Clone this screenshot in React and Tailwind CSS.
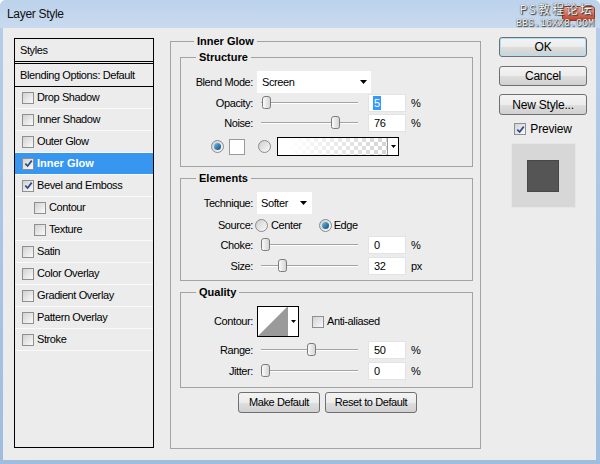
const styles = [
  { label: 'Drop Shadow' },
  { label: 'Inner Shadow' },
  { label: 'Outer Glow' },
  { label: 'Inner Glow', on: true, active: true },
  { label: 'Bevel and Emboss', on: true },
  { label: 'Contour', indent: true },
  { label: 'Texture', indent: true },
  { label: 'Satin' },
  { label: 'Color Overlay' },
  { label: 'Gradient Overlay' },
  { label: 'Pattern Overlay' },
  { label: 'Stroke' },
];

const btn =
  'rounded-[3px] border border-[#707070] bg-[linear-gradient(#f3f3f3_0%,#ececec_50%,#dedede_51%,#d0d0d0_100%)] flex items-center justify-center';

const Check = ({ on }) => (
  <span className="w-[12px] h-[12px] shrink-0 border border-[#8e8f8f] bg-gradient-to-br from-[#d2d2d2] to-[#fafafa] flex items-center justify-center">
    {on && (
      <svg viewBox="0 0 10 10" className="w-[9px] h-[9px]">
        <path d="M1.5 5.2 L4 7.8 L8.6 1.8" fill="none" stroke="#2c4a8e" strokeWidth="1.9" />
      </svg>
    )}
  </span>
);

const Radio = ({ on }) => (
  <span className="w-[13px] h-[13px] shrink-0 rounded-full border border-[#8a8a8a] bg-gradient-to-br from-[#cfcfcf] to-[#fbfbfb] flex items-center justify-center">
    {on && <span className="w-[7px] h-[7px] rounded-full bg-gradient-to-br from-[#6cc2f0] to-[#0d4a7c]" />}
  </span>
);

const Arrow = () => (
  <svg viewBox="0 0 7 4" className="w-[7px] h-[4px]">
    <polygon points="0,0 7,0 3.5,4" fill="#000" />
  </svg>
);

// thumb offset is taken from the value
const Slider = ({ value, max = 100 }) => (
  <div className="relative w-[97px] h-[14px] flex items-center">
    <div className="w-full h-[2px] border-t border-[#a3a3a3] border-b border-b-white" />
    <svg
      viewBox="0 0 9 13"
      className="absolute top-0 w-[9px] h-[13px]"
      style={{ left: Math.round((value / max) * 92) }}
    >
      <defs>
        <linearGradient id="th" x1="0" x2="1">
          <stop offset="0" stopColor="#fdfdfd" />
          <stop offset="1" stopColor="#d2d2d2" />
        </linearGradient>
      </defs>
      <path d="M0.5 3 Q0.5 0.5 3 0.5 L6 0.5 Q8.5 0.5 8.5 3 L8.5 10.5 Q8.5 12.5 6.5 12.5 L2.5 12.5 Q0.5 12.5 0.5 10.5 Z" fill="url(#th)" stroke="#7c7c7c" />
    </svg>
  </div>
);

const Field = ({ children }) => (
  <div className="w-[38px] h-[18px] bg-white border border-[#e3e3e3] flex items-center pl-[5px]">{children}</div>
);

const SliderRow = ({ label, value, max, unit, text, className = '' }) => (
  <div className={`flex items-center h-[18px] ${className}`}>
    <span className="w-[72px] text-right">{label}</span>
    <div className="ml-[8px]">
      <Slider value={value} max={max} />
    </div>
    <div className="ml-[10px]">
      <Field>{text ?? value}</Field>
    </div>
    <span className="ml-[5px]">{unit}</span>
  </div>
);

const Group = ({ title, className = '', children }) => (
  <fieldset className={`border border-[#a3a3a3] ${className}`}>
    <legend className="ml-[15px] px-[3px] font-bold tracking-normal leading-[13px]">{title}</legend>
    {children}
  </fieldset>
);

export default function App() {
  return (
    <div className="w-[600px] h-[464px] flex flex-col rounded-t-[6px] overflow-hidden bg-gradient-to-b from-[#b6cde9] to-[#9fbddf] font-['Liberation_Sans',Arial,sans-serif] text-[11px] tracking-[-0.4px] text-black">
      {/* Title bar */}
      <div className="relative h-[28px] shrink-0 flex items-center pl-[7px] bg-gradient-to-b from-[#bcd2eb] to-[#c8daef]">
        <span className="text-[12px] tracking-[-0.3px] text-[#111]">Layer Style</span>
        <div className="absolute right-[5px] top-[6px] w-[33px] h-[15px] rounded-[3px] border border-[#8a3a2c] bg-gradient-to-b from-[#e7a596] to-[#c0402a]" />
        <div className="absolute right-[6px] top-[0px] flex flex-col items-end text-[#f4f4f4] [text-shadow:0_0_1px_#333,1px_1px_1px_#333]">
          <span className="h-[18px] text-[12px] leading-[18px] tracking-[2px] font-['Noto_Sans_CJK_SC',sans-serif]">PS教程论坛</span>
          <span className="h-[11px] text-[10px] leading-[11px] tracking-normal font-['Liberation_Mono',monospace]">BBS.16XX8.COM</span>
        </div>
      </div>

      {/* Body */}
      <div className="flex-1 ml-[3px] mr-[4px] mb-[4px] bg-[#ececec] flex pt-[7px] pl-[11px]">
        {/* Styles list */}
        <div className="mt-[3px] w-[140px] h-[410px] border border-black flex flex-col">
          <div className="h-[23px] border-b border-black flex items-center pl-[5px]">Styles</div>
          <div className="mt-[1px] h-[24px] border-y border-black flex items-center pl-[5px]">Blending Options: Default</div>
          {styles.map((s) => (
            <div
              key={s.label}
              className={`h-[22px] border-b border-[#fafafa] flex items-center gap-[3px] ${s.indent ? 'pl-[19px]' : 'pl-[7px]'} ${s.active ? 'bg-[#3797f0] text-white font-bold tracking-normal' : ''}`}
            >
              <Check on={s.on} />
              <span>{s.label}</span>
            </div>
          ))}
        </div>

        {/* Inner Glow panel */}
        <fieldset className="ml-[16px] w-[311px] h-[414px] border border-[#a3a3a3] pl-[9px] pr-[7px] pt-[3px]">
          <legend className="ml-[14px] px-[3px] font-bold tracking-normal leading-[13px]">Inner Glow</legend>

          <Group title="Structure" className="h-[116px] pt-[7px]">
            <div className="flex items-center h-[22px]">
              <span className="w-[72px] text-right">Blend Mode:</span>
              <div className="ml-[4px] w-[114px] h-[22px] bg-white flex items-center justify-between pl-[5px] pr-[4px]">
                <span>Screen</span>
                <Arrow />
              </div>
            </div>
            <SliderRow
              className="mt-[1px]"
              label="Opacity:"
              value={1}
              unit="%"
              text={<span className="bg-[#3399ff] text-white px-[1px] -ml-[1px] leading-[14px]">5</span>}
            />
            <SliderRow className="mt-[2px]" label="Noise:" value={76} unit="%" />
            <div className="mt-[5px] h-[19px] flex items-center pl-[30px]">
              <Radio on />
              <div className="ml-[5px] w-[16px] h-[16px] bg-white border border-[#9a9a9a]" />
              <div className="ml-[13px]">
                <Radio />
              </div>
              <div className="ml-[6px] w-[122px] h-[19px] border border-black flex">
                <div className="flex-1 bg-[conic-gradient(#d4d4d4_25%,#ffffff_0_50%,#d4d4d4_0_75%,#ffffff_0)] bg-[length:8px_8px]">
                  <div className="w-full h-full bg-gradient-to-r from-white from-[10%] to-transparent" />
                </div>
                <div className="w-[11px] border-l border-[#9a9a9a] bg-white flex items-center justify-center">
                  <svg viewBox="0 0 5 3" className="w-[5px] h-[3px]">
                    <polygon points="0,0 5,0 2.5,3" fill="#000" />
                  </svg>
                </div>
              </div>
            </div>
          </Group>

          <Group title="Elements" className="mt-[5px] h-[109px] pt-[7px]">
            <div className="flex items-center h-[22px]">
              <span className="w-[72px] text-right">Technique:</span>
              <div className="ml-[4px] w-[55px] h-[22px] bg-white flex items-center justify-between pl-[4px] pr-[5px]">
                <span>Softer</span>
                <Arrow />
              </div>
            </div>
            <div className="mt-[1px] h-[20px] flex items-center">
              <span className="w-[72px] text-right">Source:</span>
              <span className="ml-[2px]">
                <Radio />
              </span>
              <span className="ml-[3px]">Center</span>
              <span className="ml-[17px]">
                <Radio on />
              </span>
              <span className="ml-[2px]">Edge</span>
            </div>
            <SliderRow className="mt-[1px]" label="Choke:" value={0} unit="%" />
            <SliderRow className="mt-[3px]" label="Size:" value={45} max={250} text={32} unit="px" />
          </Group>

          <Group title="Quality" className="mt-[5px] h-[102px] pt-[7px]">
            <div className="flex items-center h-[31px]">
              <span className="w-[72px] text-right">Contour:</span>
              <div className="ml-[4px] h-[31px] border border-black flex bg-white">
                <svg viewBox="0 0 29 29" className="w-[29px] h-[29px]">
                  <polygon points="0,29 29,0 29,29" fill="#9a9a9a" />
                </svg>
                <div className="w-[11px] border-l border-[#9a9a9a] flex items-center justify-center">
                  <svg viewBox="0 0 5 3" className="w-[5px] h-[3px]">
                    <polygon points="0,0 5,0 2.5,3" fill="#000" />
                  </svg>
                </div>
              </div>
              <span className="ml-[13px]">
                <Check />
              </span>
              <span className="ml-[3px]">Anti-aliased</span>
            </div>
            <SliderRow className="mt-[4px]" label="Range:" value={50} unit="%" />
            <SliderRow className="mt-[3px]" label="Jitter:" value={0} unit="%" />
          </Group>

          <div className="mt-[4px] flex justify-center gap-[5px] pl-[2px]">
            <button className={`${btn} w-[82px] h-[21px]`}>Make Default</button>
            <button className={`${btn} w-[92px] h-[21px]`}>Reset to Default</button>
          </div>
        </fieldset>

        {/* Right column */}
        <div className="ml-[18px] mt-[2px] w-[88px] flex flex-col items-center text-[12px] tracking-[-0.2px]">
          <button className={`${btn} w-full h-[20px] border-[#3c7fb1] shadow-[inset_0_0_0_1px_#a8e2fa]`}>OK</button>
          <button className={`${btn} w-full h-[20px] mt-[9px]`}>Cancel</button>
          <button className={`${btn} w-full h-[21px] mt-[8px]`}>New Style...</button>
          <div className="mt-[7px] h-[14px] flex items-center gap-[4px]">
            <Check on />
            <span>Preview</span>
          </div>
          <div className="mt-[7px] w-[65px] h-[65px] bg-[#d7d7d7] border border-[#e6e6e6] flex items-center justify-center">
            <div className="w-[32px] h-[32px] bg-[#555555] border border-[#474747]" />
          </div>
        </div>
      </div>
    </div>
  );
}
